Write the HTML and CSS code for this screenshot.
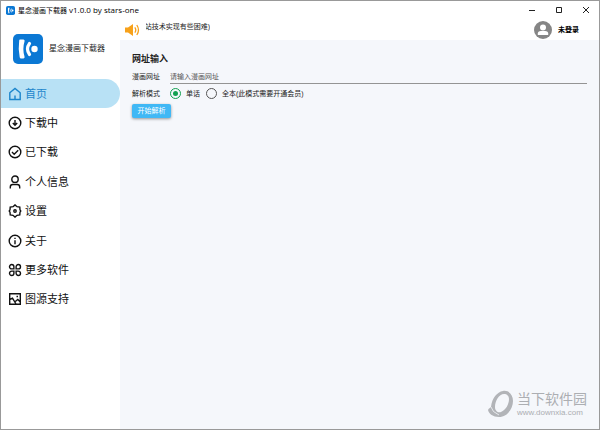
FILE: index.html
```html
<!DOCTYPE html>
<html lang="zh-CN">
<head>
    <meta charset="UTF-8">
    <meta name="viewport" content="width=device-width, initial-scale=1.0">
    <title>星念漫画下载器 v1.0.0 by stars-one</title>
    <link rel="stylesheet" href="styles.css">
</head>
<body>
    <header class="titlebar">
        <svg class="titlebar-logo" viewBox="0 0 30 30">
            <rect width="30" height="30" rx="6" fill="#0b78d4"/>
            <path d="M7 6h4q1 .5.500 2q-2 7 0 14q.5 1.500-.5 2H8Q5 15 7 6z" fill="#fff"/>
            <path d="M18 9q-4.500 6 0 12" fill="none" stroke="#fff" stroke-width="3"/>
            <circle cx="22" cy="15" r="3" fill="#fff"/>
        </svg>
        <span class="titlebar-text">星念漫画下载器 <span class="version">v1.0.0 by stars-one</span></span>
        <div class="window-buttons">
            <button type="button" aria-label="最小化"><svg viewBox="0 0 8 8"><path d="M1 4.5h6"/></svg></button>
            <button type="button" aria-label="最大化"><svg viewBox="0 0 8 8"><path d="M1.5 1.5h5v5h-5z"/></svg></button>
            <button type="button" aria-label="关闭"><svg viewBox="0 0 8 8"><path d="M1 1l6 6M7 1l-6 6"/></svg></button>
        </div>
    </header>

    <div class="window-body">
        <aside class="sidebar">
            <div class="brand">
                <svg class="brand-logo" viewBox="0 0 30 30">
                    <rect width="30" height="30" rx="5" fill="#0b78d4"/>
                    <path d="M7 5.500h3.500q1.600.4 1 2q-2.300 7.500 0 15q.6 1.600-1 2H8q-1 0-1.300-1.200Q5 15 6.200 6.500q.1-.9.8-1z" fill="#fff"/>
                    <path d="M16.500 9.500q-4 5.500 0 11" fill="none" stroke="#fff" stroke-width="3.200" stroke-linecap="round"/>
                    <circle cx="21.500" cy="15" r="3.200" fill="#fff"/>
                </svg>
                <span>星念漫画下载器</span>
            </div>
            <nav class="menu">
                <a class="menu-item active" href="#">
                    <svg viewBox="0 0 14 14"><path d="M1.800 5.800L7 1.500l5.200 4.300v6.700H1.800zM7 12.500V8.500"/></svg>首页
                </a>
                <a class="menu-item" href="#">
                    <svg viewBox="0 0 14 14"><circle cx="7" cy="7" r="5.800"/><path d="M7 4v5M4.800 7L7 9.200 9.200 7"/></svg>下载中
                </a>
                <a class="menu-item" href="#">
                    <svg viewBox="0 0 14 14"><circle cx="7" cy="7" r="5.800"/><path d="M4 7l2.200 2.200 4-4"/></svg>已下载
                </a>
                <a class="menu-item" href="#">
                    <svg viewBox="0 0 14 14"><circle cx="7" cy="4.200" r="3.200"/><path d="M2.300 13.500v-1.500q0-2.500 2.500-2.500h4.400q2.500 0 2.500 2.500v1.500"/></svg>个人信息
                </a>
                <a class="menu-item" href="#">
                    <svg viewBox="0 0 14 14"><path d="M5 2.700L7 .9l2 1.800 2.800.4.200 2.700L12.800 7 12 8.200l-.2 2.700-2.800.4-2 1.800-2-1.800-2.800-.4L2 8.200 1.200 7 2 5.800l.2-2.700z"/><circle cx="7" cy="7" r="1.200"/></svg>设置
                </a>
                <a class="menu-item" href="#">
                    <svg viewBox="0 0 14 14"><circle cx="7" cy="7" r="5.800"/><path d="M7 6.300v4M7 3.700v1.300"/></svg>关于
                </a>
                <a class="menu-item" href="#">
                    <svg viewBox="0 0 14 14"><path d="M5.900 5.900H3.700a2.200 2.200 0 1 1 2.200-2.200zM8.100 5.900V3.700a2.200 2.200 0 1 1 2.200 2.200zM5.900 8.100v2.200a2.200 2.200 0 1 1-2.200-2.200zM8.100 8.100h2.200a2.200 2.200 0 1 1-2.200 2.200z"/></svg>更多软件
                </a>
                <a class="menu-item" href="#">
                    <svg viewBox="0 0 14 14"><path d="M1.700 1.700h10.600v10.600H1.700zM1.700 7.500l2.800-1.300 3.500 5.800M7.300 9.500l2.500-2 2.500 2.500M8.500 4.500h1.500"/></svg>图源支持
                </a>
            </nav>
        </aside>

        <main class="main">
            <div class="topbar">
                <svg class="speaker" viewBox="0 0 16 14">
                    <path d="M1 4.500h3L9 1v12L4 9.500H1z" fill="#f7a11a"/>
                    <path d="M10.800 4.300q2 2.700 0 5.400M12.800 2q3.400 5 0 10" fill="none" stroke="#f7a11a" stroke-width="1.300"/>
                </svg>
                <div class="ticker"><span>站技术实现有些困难)</span></div>
                <div class="user">
                    <svg class="avatar" viewBox="0 0 18 18">
                        <circle cx="9" cy="9" r="9" fill="#858585"/>
                        <circle cx="9" cy="6.500" r="3" fill="#fff"/>
                        <path d="M3.800 14v-1.500q0-2.500 3-2.500h4.400q3 0 3 2.500v1.500z" fill="#fff"/>
                    </svg>
                    <span>未登录</span>
                </div>
            </div>

            <form class="content">
                <h2>网址输入</h2>
                <div class="row">
                    <label class="row-label" for="url">漫画网址</label>
                    <input class="url-input" type="text" id="url" placeholder="请输入漫画网址">
                </div>
                <div class="row">
                    <span class="row-label">解析模式</span>
                    <label class="radio"><input type="radio" name="mode" checked>单话</label>
                    <label class="radio"><input type="radio" name="mode">全本(此模式需要开通会员)</label>
                </div>
                <button class="parse-button" type="button">开始解析</button>
            </form>

            <div class="watermark">
                <svg viewBox="0 0 26 28">
                    <path fill-rule="evenodd" d="M15 1c6-1 10 4 10 10 0 8-6 16-14 16C5 27 1 24 0 20c1-2 2-2 3-3C4 8 9 2 15 1zM16 4c-5 0-9 7-9 13 0 4 3 6 6 5 5-2 8-8 8-13 0-3-2-5-5-5z" fill="#b2b4b8"/>
                    <path d="M3 17q1 5 8 8" fill="none" stroke="#f5f7fb" stroke-width=".8"/>
                </svg>
                <div>
                    <div class="watermark-name">当下软件园</div>
                    <div class="watermark-url">www.downxia.com</div>
                </div>
            </div>
        </main>
    </div>
</body>
</html>
```

FILE: styles.css
```css
* {
    box-sizing: border-box;
}
body {
    margin: 0;
    min-height: 100vh;
    display: flex;
    flex-direction: column;
    border: 1px solid #999;
    background-color: #fff;
    color: #222;
    font-family: "Liberation Sans", "Noto Sans CJK SC", sans-serif;
    font-size: 7px;
    line-height: 12px;
}
button,
input {
    font: inherit;
    color: inherit;
}
.titlebar {
    display: flex;
    align-items: center;
    height: 18px;
    padding-left: 5px;
    gap: 3px;
    color: #000;
}
.titlebar-logo {
    width: 9px;
    height: 9px;
}
.version {
    font-family: "Open Sans", sans-serif;
    font-size: 8px;
}
.window-buttons {
    display: flex;
    margin-left: auto;
}
.window-buttons button {
    display: flex;
    align-items: center;
    justify-content: center;
    width: 27px;
    height: 18px;
    padding: 0;
    border: none;
    background: none;
}
.window-buttons svg {
    width: 8px;
    height: 8px;
    fill: none;
    stroke: #222;
}
.window-body {
    flex: 1;
    display: flex;
}
.sidebar {
    width: 119px;
}
.brand {
    display: flex;
    align-items: center;
    gap: 6px;
    height: 60px;
    padding-left: 12px;
    font-size: 8px;
}
.brand-logo {
    width: 30px;
    height: 30px;
}
.menu {
    display: flex;
    flex-direction: column;
    justify-content: space-between;
    height: 235px;
}
.menu-item {
    display: flex;
    align-items: center;
    gap: 3px;
    height: 29px;
    padding-left: 7px;
    border-radius: 0 15px 15px 0;
    color: #111;
    font-size: 11px;
    text-decoration: none;
}
.menu-item svg {
    width: 14px;
    height: 14px;
    fill: none;
    stroke: currentColor;
    stroke-width: 1.4;
}
.menu-item.active {
    background-color: #b8e1f5;
    color: #1c86cc;
}
.main {
    flex: 1;
    display: flex;
    flex-direction: column;
    background-color: #f5f7fb;
}
.topbar {
    display: flex;
    align-items: center;
    height: 21px;
    padding: 0 20px 0 4px;
    background-color: #fff;
}
.speaker {
    width: 16px;
    height: 14px;
}
.ticker {
    display: flex;
    justify-content: flex-end;
    align-self: flex-start;
    width: 64px;
    margin-left: 6px;
    padding-top: 2px;
    overflow: hidden;
    white-space: nowrap;
}
.user {
    display: flex;
    align-items: center;
    gap: 6px;
    margin-left: auto;
    color: #000;
    font-weight: bold;
}
.avatar {
    width: 18px;
    height: 18px;
}
.content {
    padding: 12px;
}
h2 {
    margin: 0 0 2px;
    font-size: 9px;
    line-height: 14px;
}
.row {
    display: flex;
    align-items: center;
    height: 17px;
}
.row-label {
    width: 38px;
}
.url-input {
    flex: 1;
    height: 15px;
    padding: 0;
    border: none;
    border-bottom: 1px solid #949494;
    background: none;
    outline: none;
}
.url-input::placeholder {
    color: #555;
}
.radio {
    display: flex;
    align-items: center;
    gap: 5px;
    margin-right: 6px;
}
.radio input {
    appearance: none;
    display: grid;
    place-items: center;
    width: 11px;
    height: 11px;
    margin: 0;
    border: 1px solid #555;
    border-radius: 50%;
}
.radio input:checked {
    border-color: #12a150;
}
.radio input:checked::before {
    content: "";
    width: 5px;
    height: 5px;
    border-radius: 50%;
    background-color: #12a150;
}
.parse-button {
    display: block;
    width: 39px;
    height: 14px;
    margin-top: 2px;
    padding: 0;
    border: none;
    border-radius: 2px;
    background-color: #40b8f5;
    color: #fff;
    box-shadow: 0 1px 3px rgba(0, 0, 0, 0.4);
}
.watermark {
    display: flex;
    align-items: center;
    gap: 3px;
    margin-top: auto;
    margin-left: auto;
    padding: 0 12px 11px 0;
    color: #acaeb2;
}
.watermark svg {
    width: 26px;
    height: 28px;
}
.watermark-name {
    font-size: 14px;
    line-height: 18px;
}
.watermark-url {
    font-size: 8px;
    line-height: 10px;
}
```
